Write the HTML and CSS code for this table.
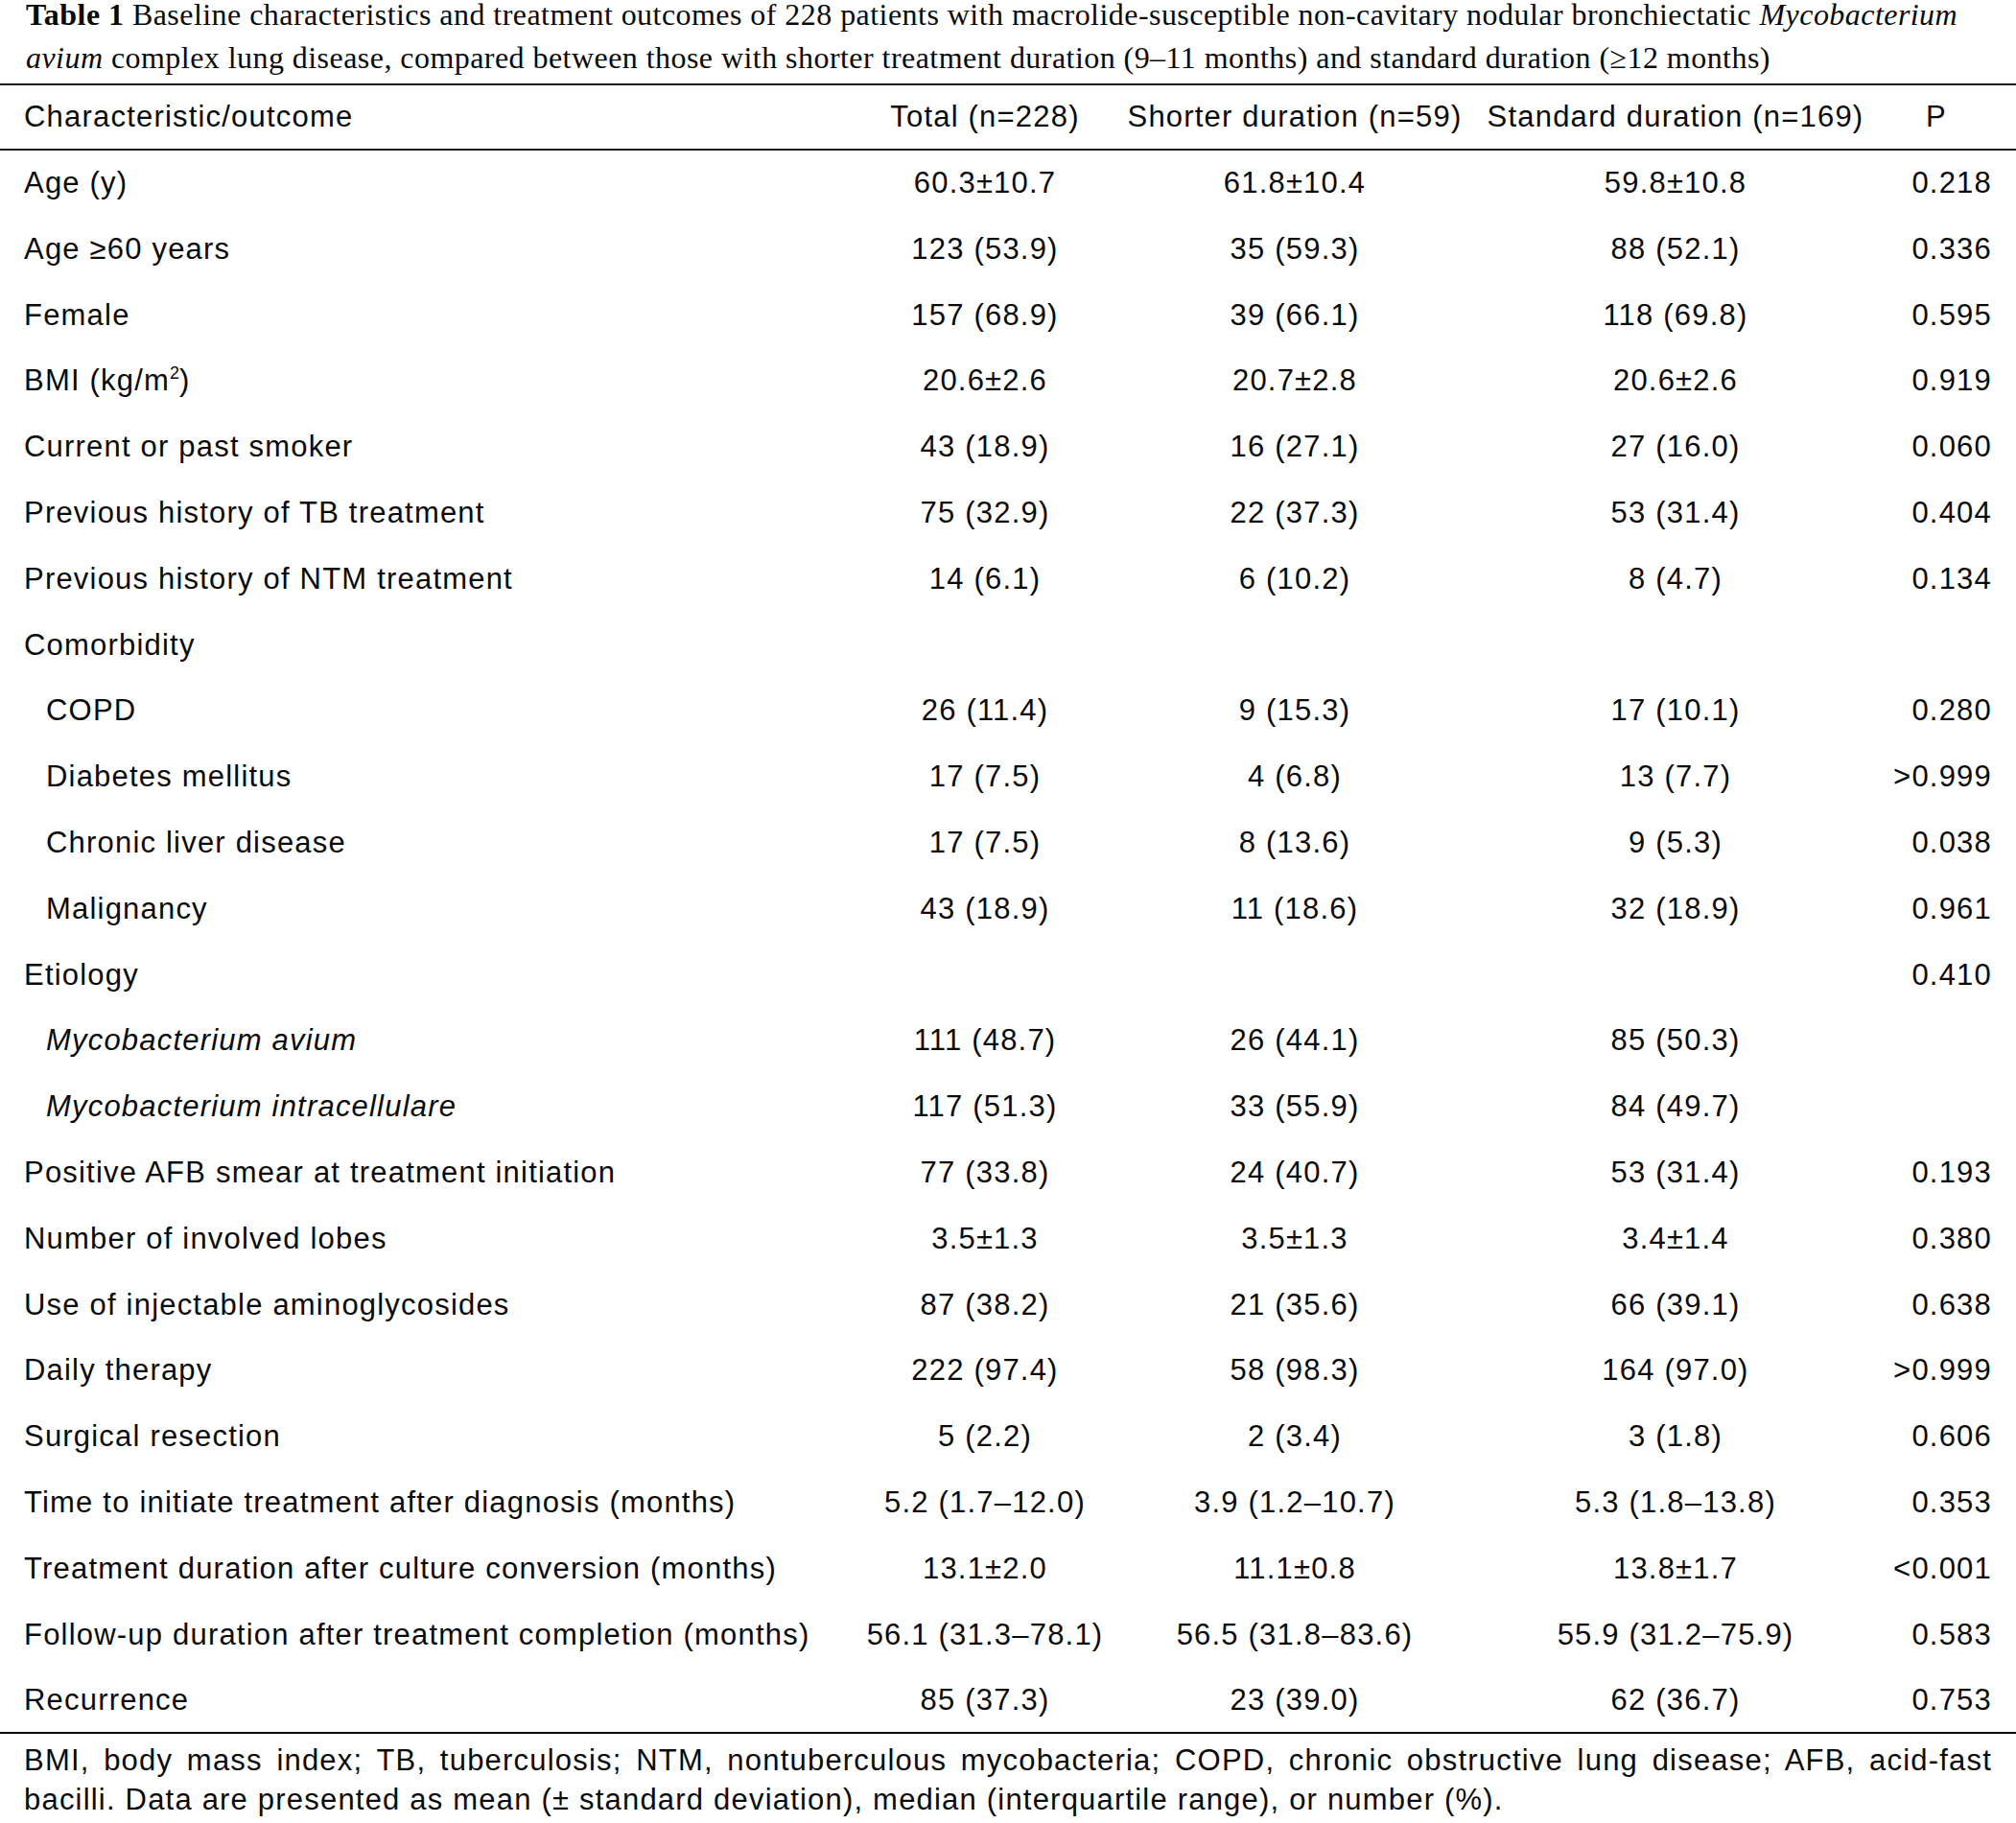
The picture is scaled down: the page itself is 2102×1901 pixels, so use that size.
FILE: index.html
```html
<!DOCTYPE html>
<html lang="en">
<head>
<meta charset="utf-8">
<title>Table 1</title>
<link rel="stylesheet" href="styles.css">
</head>
<body>
<figure class="tbl-figure">
  <p class="caption"><b class="caption-label">Table 1</b> Baseline characteristics and treatment outcomes of 228 patients with macrolide-susceptible non-cavitary nodular bronchiectatic <i>Mycobacterium</i> <i>avium</i> complex lung disease, compared between those with shorter treatment duration (9–11 months) and standard duration (≥12 months)</p>
  <table class="data">
    <colgroup>
      <col class="c-label">
      <col class="c-total">
      <col class="c-short">
      <col class="c-std">
      <col class="c-p">
    </colgroup>
    <thead>
      <tr>
        <th class="lbl">Characteristic/outcome</th>
        <th>Total (n=228)</th>
        <th>Shorter duration (n=59)</th>
        <th>Standard duration (n=169)</th>
        <th class="p-head">P</th>
      </tr>
    </thead>
    <tbody>
      <tr><td class="lbl">Age (y)</td><td>60.3±10.7</td><td>61.8±10.4</td><td>59.8±10.8</td><td class="p">0.218</td></tr>
      <tr><td class="lbl">Age ≥60 years</td><td>123 (53.9)</td><td>35 (59.3)</td><td>88 (52.1)</td><td class="p">0.336</td></tr>
      <tr><td class="lbl">Female</td><td>157 (68.9)</td><td>39 (66.1)</td><td>118 (69.8)</td><td class="p">0.595</td></tr>
      <tr><td class="lbl">BMI (kg/m<sup>2</sup>)</td><td>20.6±2.6</td><td>20.7±2.8</td><td>20.6±2.6</td><td class="p">0.919</td></tr>
      <tr><td class="lbl">Current or past smoker</td><td>43 (18.9)</td><td>16 (27.1)</td><td>27 (16.0)</td><td class="p">0.060</td></tr>
      <tr><td class="lbl">Previous history of TB treatment</td><td>75 (32.9)</td><td>22 (37.3)</td><td>53 (31.4)</td><td class="p">0.404</td></tr>
      <tr><td class="lbl">Previous history of NTM treatment</td><td>14 (6.1)</td><td>6 (10.2)</td><td>8 (4.7)</td><td class="p">0.134</td></tr>
      <tr><td class="lbl">Comorbidity</td><td></td><td></td><td></td><td class="p"></td></tr>
      <tr><td class="lbl sub">COPD</td><td>26 (11.4)</td><td>9 (15.3)</td><td>17 (10.1)</td><td class="p">0.280</td></tr>
      <tr><td class="lbl sub">Diabetes mellitus</td><td>17 (7.5)</td><td>4 (6.8)</td><td>13 (7.7)</td><td class="p">&gt;0.999</td></tr>
      <tr><td class="lbl sub">Chronic liver disease</td><td>17 (7.5)</td><td>8 (13.6)</td><td>9 (5.3)</td><td class="p">0.038</td></tr>
      <tr><td class="lbl sub">Malignancy</td><td>43 (18.9)</td><td>11 (18.6)</td><td>32 (18.9)</td><td class="p">0.961</td></tr>
      <tr><td class="lbl">Etiology</td><td></td><td></td><td></td><td class="p">0.410</td></tr>
      <tr><td class="lbl sub"><i>Mycobacterium avium</i></td><td>111 (48.7)</td><td>26 (44.1)</td><td>85 (50.3)</td><td class="p"></td></tr>
      <tr><td class="lbl sub"><i>Mycobacterium intracellulare</i></td><td>117 (51.3)</td><td>33 (55.9)</td><td>84 (49.7)</td><td class="p"></td></tr>
      <tr><td class="lbl">Positive AFB smear at treatment initiation</td><td>77 (33.8)</td><td>24 (40.7)</td><td>53 (31.4)</td><td class="p">0.193</td></tr>
      <tr><td class="lbl">Number of involved lobes</td><td>3.5±1.3</td><td>3.5±1.3</td><td>3.4±1.4</td><td class="p">0.380</td></tr>
      <tr><td class="lbl">Use of injectable aminoglycosides</td><td>87 (38.2)</td><td>21 (35.6)</td><td>66 (39.1)</td><td class="p">0.638</td></tr>
      <tr><td class="lbl">Daily therapy</td><td>222 (97.4)</td><td>58 (98.3)</td><td>164 (97.0)</td><td class="p">&gt;0.999</td></tr>
      <tr><td class="lbl">Surgical resection</td><td>5 (2.2)</td><td>2 (3.4)</td><td>3 (1.8)</td><td class="p">0.606</td></tr>
      <tr><td class="lbl">Time to initiate treatment after diagnosis (months)</td><td>5.2 (1.7–12.0)</td><td>3.9 (1.2–10.7)</td><td>5.3 (1.8–13.8)</td><td class="p">0.353</td></tr>
      <tr><td class="lbl">Treatment duration after culture conversion (months)</td><td>13.1±2.0</td><td>11.1±0.8</td><td>13.8±1.7</td><td class="p">&lt;0.001</td></tr>
      <tr><td class="lbl">Follow-up duration after treatment completion (months)</td><td>56.1 (31.3–78.1)</td><td>56.5 (31.8–83.6)</td><td>55.9 (31.2–75.9)</td><td class="p">0.583</td></tr>
      <tr class="last"><td class="lbl">Recurrence</td><td>85 (37.3)</td><td>23 (39.0)</td><td>62 (36.7)</td><td class="p">0.753</td></tr>
    </tbody>
  </table>
  <p class="footnote">BMI, body mass index; TB, tuberculosis; NTM, nontuberculous mycobacteria; COPD, chronic obstructive lung disease; AFB, acid-fast bacilli. Data are presented as mean (± standard deviation), median (interquartile range), or number (%).</p>
</figure>
</body>
</html>
```

FILE: styles.css
```css
html, body {
  margin: 0;
  padding: 0;
  background: #ffffff;
}

body {
  color: #0a0a0a;
  font-family: "Liberation Sans", Arial, Helvetica, sans-serif;
  font-size: 31px;
}

.tbl-figure {
  margin: 0;
  width: 2102px;
}

.caption {
  margin: -7px 0 4px 0;
  padding: 0 25px 0 27px;
  font-family: "Liberation Serif", "Times New Roman", serif;
  font-size: 32px;
  line-height: 45px;
  letter-spacing: 0.45px;
}

.caption-label {
  font-weight: bold;
}

.data {
  width: 2102px;
  table-layout: fixed;
  border-collapse: separate;
  border-spacing: 0;
  letter-spacing: 1.2px;
}

.c-label { width: 890px; }
.c-total { width: 274px; }
.c-short { width: 372px; }
.c-std { width: 422px; }
.c-p { width: 144px; }

.data th {
  font-weight: normal;
  text-align: center;
  white-space: nowrap;
  padding: 0;
  line-height: 66px;
  border-top: 2px solid #1a1a1a;
  border-bottom: 2px solid #1a1a1a;
}

.data td {
  text-align: center;
  white-space: nowrap;
  padding: 0;
  line-height: 68.8px;
}

.data .lbl {
  text-align: left;
  padding-left: 25px;
}

.data .lbl.sub {
  padding-left: 48px;
}

.data .p {
  text-align: right;
  padding-right: 25px;
}

.data .p-head {
  text-align: left;
  padding-left: 50px;
}

.data tr.last td {
  line-height: 67px;
  border-bottom: 2px solid #0a0a0a;
}

.data sup {
  font-size: 18px;
  line-height: 0;
  letter-spacing: 0;
  vertical-align: 12px;
}

.footnote {
  margin: 7px 0 0 0;
  padding: 0 25px;
  line-height: 41px;
  letter-spacing: 1.2px;
  text-align: justify;
}
```
